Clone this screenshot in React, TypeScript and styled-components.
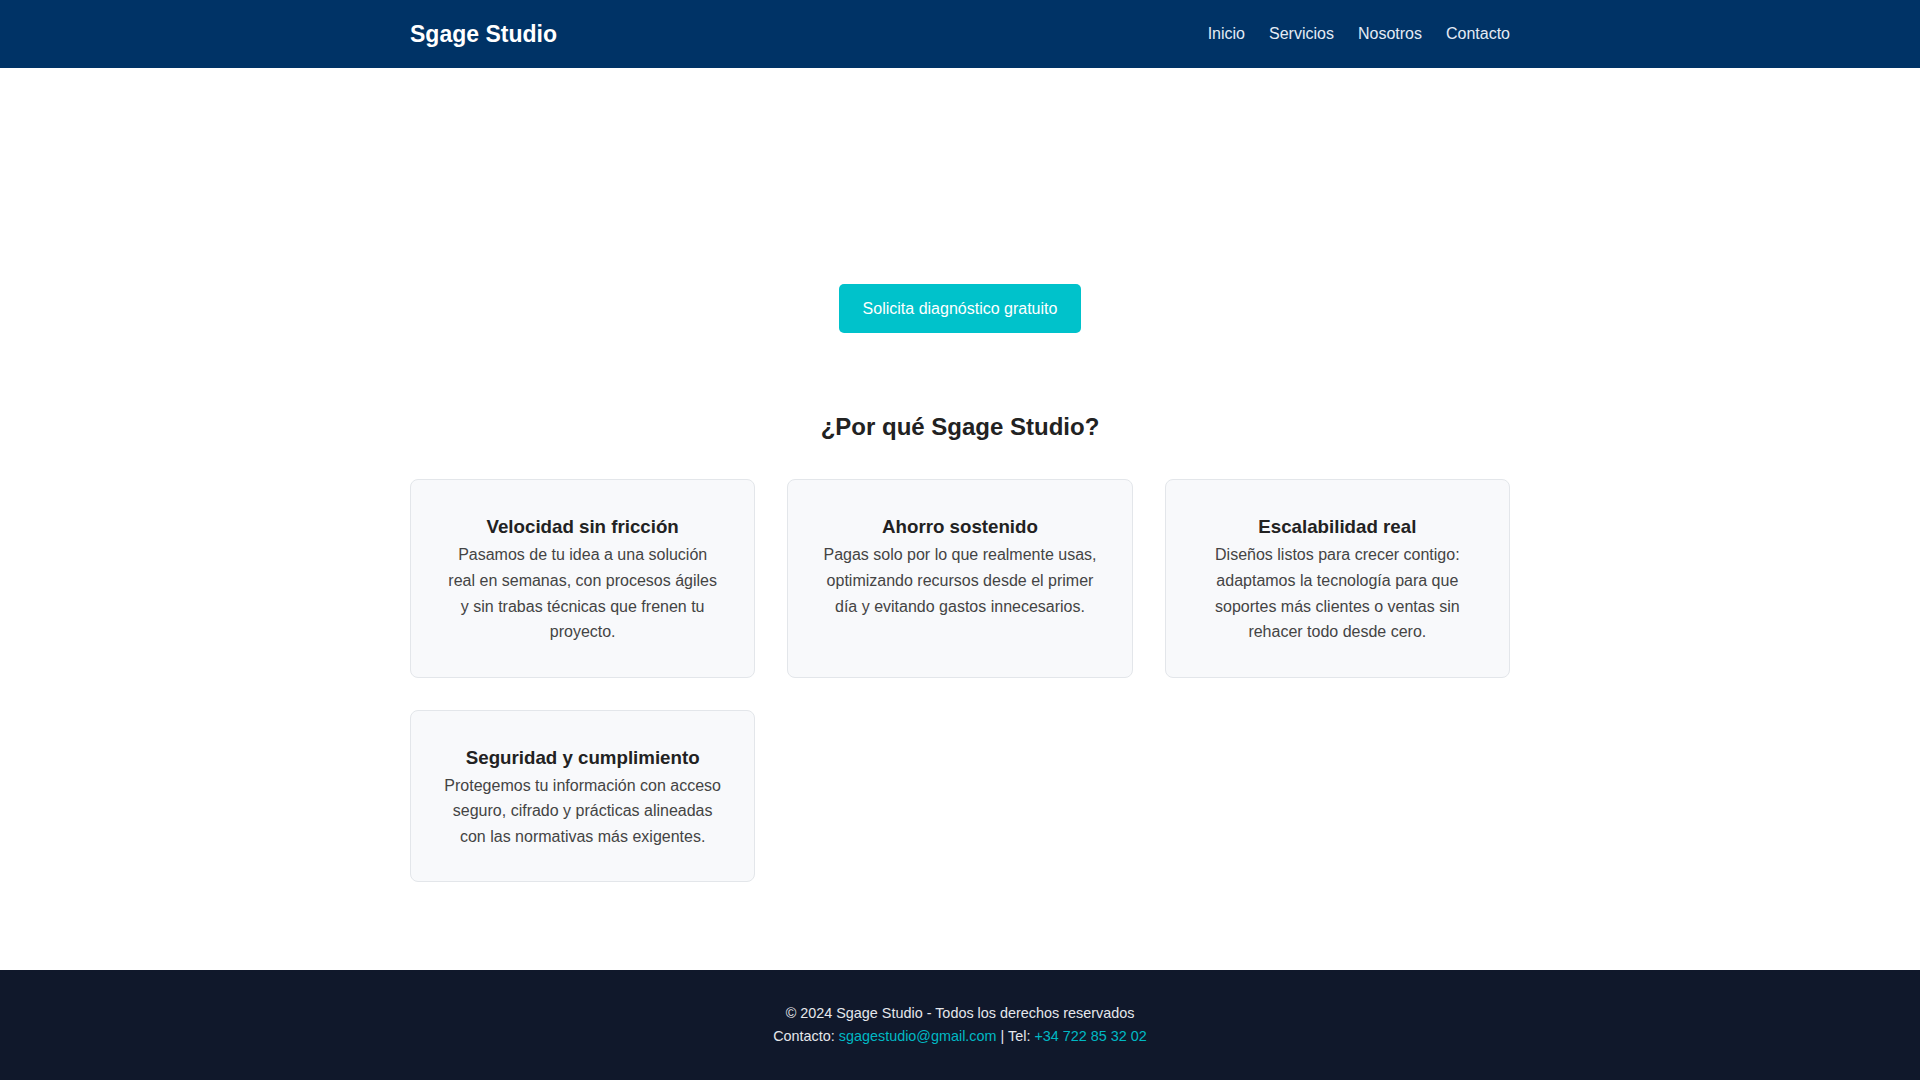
import styled, { createGlobalStyle } from "styled-components";

const features = [
  {
    title: "Velocidad sin fricción",
    text: "Pasamos de tu idea a una solución real en semanas, con procesos ágiles y sin trabas técnicas que frenen tu proyecto.",
  },
  {
    title: "Ahorro sostenido",
    text: "Pagas solo por lo que realmente usas, optimizando recursos desde el primer día y evitando gastos innecesarios.",
  },
  {
    title: "Escalabilidad real",
    text: "Diseños listos para crecer contigo: adaptamos la tecnología para que soportes más clientes o ventas sin rehacer todo desde cero.",
  },
  {
    title: "Seguridad y cumplimiento",
    text: "Protegemos tu información con acceso seguro, cifrado y prácticas alineadas con las normativas más exigentes.",
  },
];

function App() {
  return (
    <>
      <GlobalStyle />
      <Header>
        <HeaderInner>
          <Logo>Sgage Studio</Logo>
          <Nav>
            <NavLink href="#">Inicio</NavLink>
            <NavLink href="#">Servicios</NavLink>
            <NavLink href="#">Nosotros</NavLink>
            <NavLink href="#">Contacto</NavLink>
          </Nav>
        </HeaderInner>
      </Header>
      <Hero>
        <CtaButton>Solicita diagnóstico gratuito</CtaButton>
      </Hero>
      <Features>
        <SectionTitle>¿Por qué Sgage Studio?</SectionTitle>
        <Grid>
          {features.map((f) => (
            <Card key={f.title}>
              <CardTitle>{f.title}</CardTitle>
              <CardText>{f.text}</CardText>
            </Card>
          ))}
        </Grid>
      </Features>
      <Footer>
        <FooterLine>© 2024 Sgage Studio - Todos los derechos reservados</FooterLine>
        <FooterLine>
          Contacto: <FooterLink href="#">sgagestudio@gmail.com</FooterLink> | Tel:{" "}
          <FooterLink href="#">+34 722 85 32 02</FooterLink>
        </FooterLine>
      </Footer>
    </>
  );
}

export default App;

const GlobalStyle = createGlobalStyle`
  body {
    margin: 0;
    font-family: "Liberation Sans", Arial, sans-serif;
    line-height: 1.6;
    color: #333;
    background: #fff;
  }
  * { box-sizing: border-box; }
`;

const Header = styled.header`
  background-color: #003366;
  height: 68px;
  display: flex;
  align-items: center;
`;

const HeaderInner = styled.div`
  width: 1100px;
  margin: 0 auto;
  display: flex;
  align-items: center;
  justify-content: space-between;
`;

const Logo = styled.div`
  color: #fff;
  font-size: 23px;
  font-weight: bold;
`;

const Nav = styled.nav`
  display: flex;
  gap: 24px;
`;

const NavLink = styled.a`
  color: #e4ebf5;
  font-size: 16px;
  text-decoration: none;
`;

const Hero = styled.section`
  display: flex;
  justify-content: center;
  padding: 216px 0 75px;
`;

const CtaButton = styled.button`
  background-color: #00c2cb;
  color: #fff;
  border: none;
  border-radius: 5px;
  padding: 15px 24px;
  font-family: inherit;
  font-size: 16px;
  line-height: 19px;
  cursor: pointer;
`;

const Features = styled.section`
  width: 1100px;
  margin: 0 auto;
  padding-bottom: 88px;
`;

const SectionTitle = styled.h2`
  margin: 0 0 33px;
  text-align: center;
  font-size: 24px;
  color: #222;
`;

const Grid = styled.div`
  display: grid;
  grid-template-columns: repeat(3, 1fr);
  gap: 32px;
`;

const Card = styled.div`
  background: #f8f9fb;
  border: 1px solid #e3e6ea;
  border-radius: 8px;
  padding: 32px;
  text-align: center;
`;

const CardTitle = styled.h3`
  margin: 0;
  font-size: 18.72px;
  color: #222;
`;

const CardText = styled.p`
  margin: 0;
  font-size: 16px;
  color: #444;
`;

const Footer = styled.footer`
  background-color: #10182b;
  padding: 32px 0 33px;
  text-align: center;
`;

const FooterLine = styled.p`
  margin: 0;
  color: #e5e7eb;
  font-size: 14.4px;
  line-height: 22.5px;
`;

const FooterLink = styled.a`
  color: #00b8c4;
  text-decoration: none;
`;
